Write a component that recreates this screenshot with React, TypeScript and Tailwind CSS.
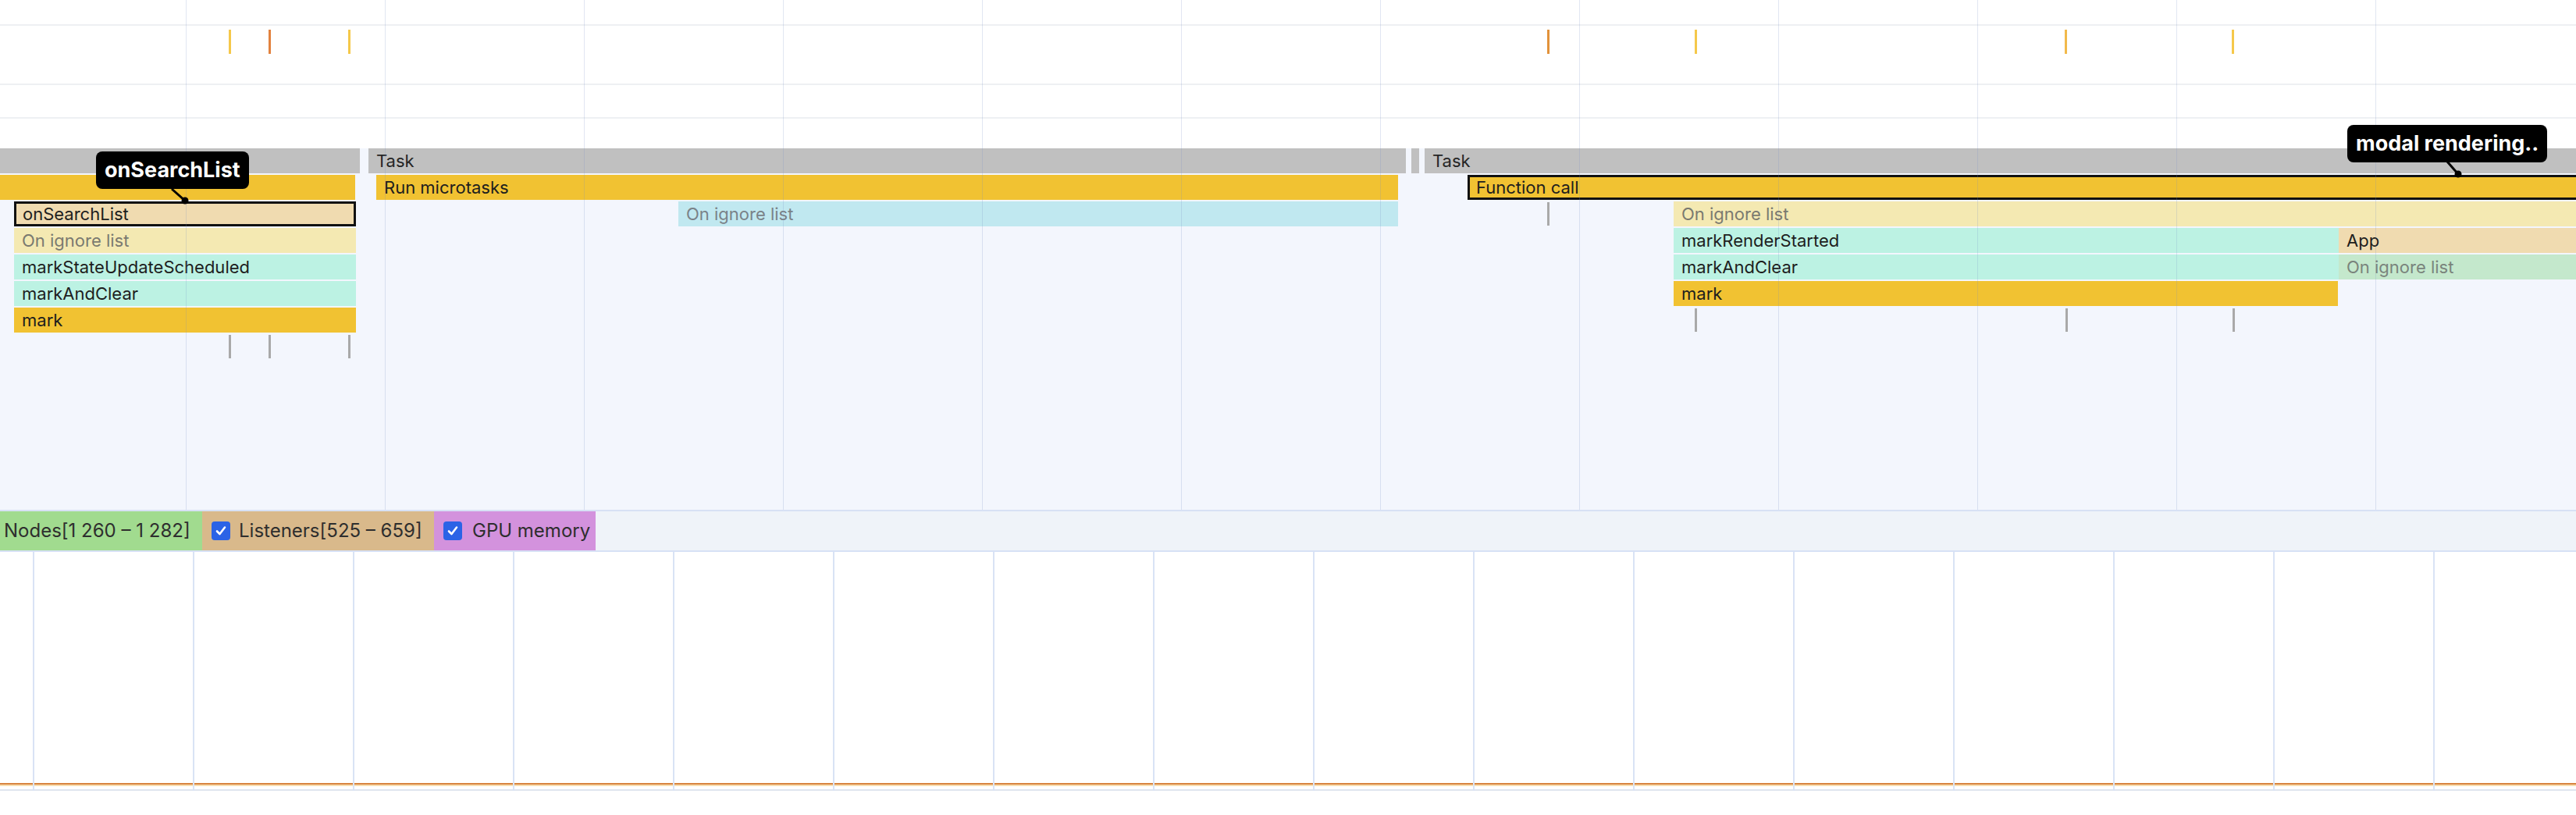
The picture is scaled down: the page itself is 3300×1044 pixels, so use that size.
import React from 'react';

type Kind =
  | 'task'
  | 'yellow'
  | 'ignoreYellow'
  | 'ignoreBlue'
  | 'ignoreGreen'
  | 'teal'
  | 'peach'
  | 'tick';

type Bar = {
  start: number;
  end: number;
  kind: Kind;
  label?: string;
  selected?: boolean;
};

const kindClass: Record<Kind, string> = {
  task: 'bg-[#c0c0c0] text-[#262626]',
  yellow: 'bg-[#f1c232] text-[#1e1e1e]',
  ignoreYellow: 'bg-[#f4e9b2] text-[#7a7a70]',
  ignoreBlue: 'bg-[#c0e8f0] text-[#7a8288]',
  ignoreGreen: 'bg-[#c4e8cc] text-[#7a847c]',
  teal: 'bg-[#bcf2e3] text-[#1e1e1e]',
  peach: 'bg-[#f0dbb0] text-[#1e1e1e]',
  tick: 'bg-[#a9a9a9] my-[1px]',
};

// フレームチャートの各行（x はページ上のピクセル）
const rows: Bar[][] = [
  [
    { start: 0, end: 461, kind: 'task' },
    { start: 472, end: 1801, kind: 'task', label: 'Task' },
    { start: 1808, end: 1817, kind: 'task' },
    { start: 1824, end: 3300, kind: 'task', label: 'Task' },
  ],
  [
    { start: 0, end: 455, kind: 'yellow' },
    { start: 482, end: 1791, kind: 'yellow', label: 'Run microtasks' },
    { start: 1880, end: 3310, kind: 'yellow', label: 'Function call', selected: true },
  ],
  [
    { start: 18, end: 456, kind: 'peach', label: 'onSearchList', selected: true },
    { start: 869, end: 1791, kind: 'ignoreBlue', label: 'On ignore list' },
    { start: 1982, end: 1985, kind: 'tick' },
    { start: 2144, end: 3300, kind: 'ignoreYellow', label: 'On ignore list' },
  ],
  [
    { start: 18, end: 456, kind: 'ignoreYellow', label: 'On ignore list' },
    { start: 2144, end: 2996, kind: 'teal', label: 'markRenderStarted' },
    { start: 2996, end: 3300, kind: 'peach', label: 'App' },
  ],
  [
    { start: 18, end: 456, kind: 'teal', label: 'markStateUpdateScheduled' },
    { start: 2144, end: 2996, kind: 'teal', label: 'markAndClear' },
    { start: 2996, end: 3300, kind: 'ignoreGreen', label: 'On ignore list' },
  ],
  [
    { start: 18, end: 456, kind: 'teal', label: 'markAndClear' },
    { start: 2144, end: 2995, kind: 'yellow', label: 'mark' },
  ],
  [
    { start: 18, end: 456, kind: 'yellow', label: 'mark' },
    { start: 2171, end: 2174, kind: 'tick' },
    { start: 2646, end: 2649, kind: 'tick' },
    { start: 2860, end: 2863, kind: 'tick' },
  ],
  [
    { start: 293, end: 296, kind: 'tick' },
    { start: 344, end: 347, kind: 'tick' },
    { start: 446, end: 449, kind: 'tick' },
  ],
];

const topMarks = [
  { x: 293, color: 'bg-[#f5c84a]' },
  { x: 344, color: 'bg-[#e2823e]' },
  { x: 446, color: 'bg-[#f5c84a]' },
  { x: 1982, color: 'bg-[#e2923a]' },
  { x: 2171, color: 'bg-[#f5c84a]' },
  { x: 2645, color: 'bg-[#f2b94a]' },
  { x: 2859, color: 'bg-[#f5c84a]' },
];

const flameGrid = Array.from({ length: 12 }, (_, i) => 238 + 255 * i);
const counterGrid = Array.from({ length: 16 }, (_, i) => 42 + 205 * i);

const FlameRow: React.FC<{ bars: Bar[] }> = ({ bars }) => {
  let cursor = 0;
  return (
    <div className="flex h-[32px] mb-[2px]">
      {bars.map((bar, i) => {
        const style = { marginLeft: bar.start - cursor, width: bar.end - bar.start };
        cursor = bar.end;
        if (bar.kind === 'tick') {
          return <div key={i} style={style} className={`shrink-0 ${kindClass.tick}`} />;
        }
        return (
          <div
            key={i}
            style={style}
            className={`shrink-0 overflow-hidden whitespace-nowrap text-[22px] ${kindClass[bar.kind]} ${
              bar.selected
                ? 'border-[3px] border-[#111] pl-[8px] leading-[26px]'
                : 'pl-[10px] leading-[32px]'
            }`}
          >
            {bar.label}
          </div>
        );
      })}
    </div>
  );
};

const Check = () => (
  <div className="w-[24px] h-[24px] rounded-[4px] bg-[#2b63e6] flex items-center justify-center shrink-0">
    <svg width="16" height="16" viewBox="0 0 16 16">
      <polyline points="3,8.5 6.5,12 13,3.5" fill="none" stroke="white" strokeWidth="2.6" strokeLinecap="round" strokeLinejoin="round" />
    </svg>
  </div>
);

const Tooltip: React.FC<{ text: string; className: string }> = ({ text, className }) => (
  <div
    className={`absolute bg-black text-white font-bold text-[27px] h-[48px] leading-[48px] rounded-[8px] px-[11px] whitespace-nowrap ${className}`}
  >
    {text}
  </div>
);

export default function App() {
  return (
    <div
      className="relative w-[3300px] h-[1044px] overflow-hidden bg-white"
      style={{ fontFamily: 'Inter, "Noto Sans", "Liberation Sans", sans-serif' }}
    >
      {/* タイムライン上部 + フレームチャート */}
      <div className="relative">
        <div className="h-[31px]" />
        <div className="h-[2px] bg-[#eef0f3]" />
        <div className="h-[74px] pt-[5px] flex">
          {topMarks.map((m, i) => (
            <div
              key={i}
              className={`h-[31px] w-[3px] shrink-0 ${m.color}`}
              style={{ marginLeft: i === 0 ? m.x : m.x - topMarks[i - 1].x - 3 }}
            />
          ))}
        </div>
        <div className="h-[2px] bg-[#eef0f3]" />
        <div className="h-[41px]" />
        <div className="h-[2px] bg-[#eef0f3]" />
        <div className="h-[38px]" />

        <div className="h-[463px] bg-[#f3f6fd] overflow-hidden">
          {rows.map((bars, i) => (
            <FlameRow key={i} bars={bars} />
          ))}
        </div>

        {/* グリッド線 */}
        <div className="pointer-events-none absolute inset-0 flex">
          {flameGrid.map((x, i) => (
            <div
              key={x}
              className="w-px h-full bg-[rgba(120,140,195,0.22)] shrink-0"
              style={{ marginLeft: i === 0 ? x : 254 }}
            />
          ))}
        </div>
      </div>

      {/* カウンター凡例 */}
      <div className="h-[2px] bg-[#d7e1f5]" />
      <div className="h-[50px] flex bg-[#eff3f9] text-[24px] text-[#2e2e2e]">
        <div className="w-[259px] bg-[#a1db8f] flex items-center pl-[5px] whitespace-nowrap">
          Nodes[1 260 – 1 282]
        </div>
        <div className="w-[297px] bg-[#d9b98b] flex items-center pl-[12px] gap-[11px] whitespace-nowrap">
          <Check />
          Listeners[525 – 659]
        </div>
        <div className="w-[207px] bg-[#d392dd] flex items-center pl-[12px] gap-[13px] whitespace-nowrap">
          <Check />
          GPU memory
        </div>
      </div>
      <div className="h-[2px] bg-[#d7e1f5]" />

      {/* カウンターグラフ */}
      <div className="relative">
        <div className="h-[296px]" />
        <div className="h-[2px] bg-[#d8843f]" />
        <div className="h-[2px] bg-[#f7dcae]" />
        <div className="h-[4px]" />
        <div className="h-[2px] bg-[#dfe5ef]" />
        <div className="pointer-events-none absolute left-0 right-0 top-0 h-[306px] flex">
          {counterGrid.map((x, i) => (
            <div
              key={x}
              className="w-[2px] h-full bg-[#d9e3f5] shrink-0"
              style={{ marginLeft: i === 0 ? x : 203 }}
            />
          ))}
        </div>
      </div>

      {/* ツールチップ */}
      <Tooltip text="onSearchList" className="left-[123px] top-[194px]" />
      <Tooltip text="modal rendering.." className="left-[3007px] top-[160px]" />
      <svg className="pointer-events-none absolute left-0 top-0" width="3300" height="300">
        <line x1="220" y1="242" x2="237" y2="257" stroke="#000" strokeWidth="3" />
        <circle cx="237" cy="257" r="4.5" fill="#000" />
        <line x1="3135" y1="207" x2="3149" y2="223" stroke="#000" strokeWidth="3" />
        <circle cx="3149" cy="223" r="4.5" fill="#000" />
      </svg>
    </div>
  );
}
